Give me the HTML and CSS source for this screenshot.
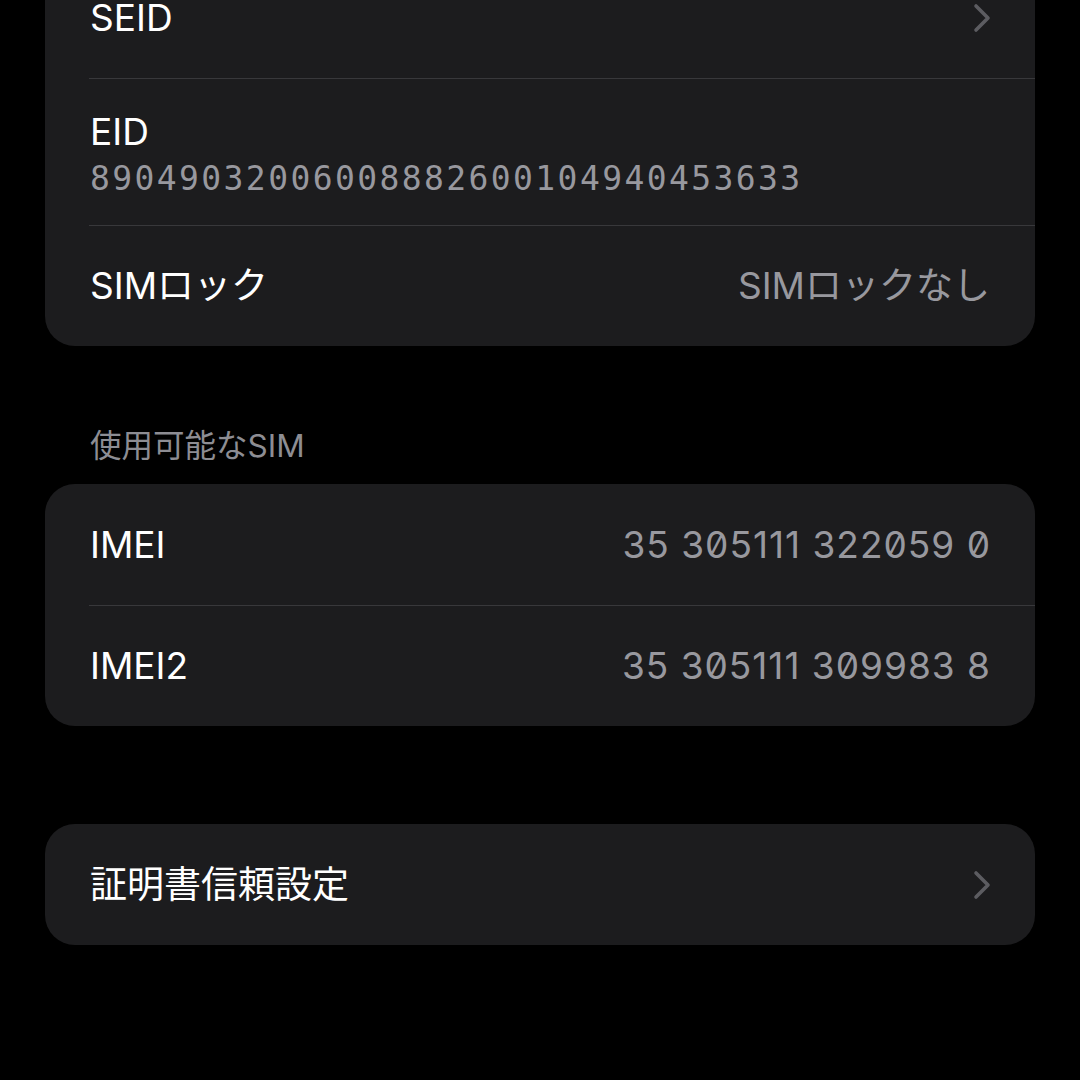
FILE: index.html
```html
<!DOCTYPE html>
<html lang="ja">
<head>
<meta charset="utf-8">
<title>情報</title>
<link rel="stylesheet" href="styles.css">
</head>
<body>
<main class="page">
  <section class="card card-first">
    <div class="row">
      <span class="label">SEID</span>
      <svg class="chevron" viewBox="0 0 18 30" width="18" height="30"><polyline points="3,3 15,15 3,27"/></svg>
    </div>
    <div class="row row-stack">
      <span class="label">EID</span>
      <span class="mono">89049032006008882600104940453633</span>
    </div>
    <div class="row">
      <span class="label">SIMロック</span>
      <span class="value">SIMロックなし</span>
    </div>
  </section>

  <h2 class="section-header">使用可能なSIM</h2>

  <section class="card">
    <div class="row">
      <span class="label">IMEI</span>
      <span class="value num">35 305111 322059 0</span>
    </div>
    <div class="row">
      <span class="label">IMEI2</span>
      <span class="value num">35 305111 309983 8</span>
    </div>
  </section>

  <section class="card card-last">
    <div class="row">
      <span class="label">証明書信頼設定</span>
      <svg class="chevron" viewBox="0 0 18 30" width="18" height="30"><polyline points="3,3 15,15 3,27"/></svg>
    </div>
  </section>
</main>
</body>
</html>
```
FILE: styles.css
```css
html, body {
  margin: 0;
  padding: 0;
  background: #000000;
}

body {
  width: 1080px;
  height: 1080px;
  overflow: hidden;
  font-family: "Inter", "Noto Sans CJK JP", sans-serif;
  color: #ffffff;
}

.page {
  display: flex;
  flex-direction: column;
  padding: 0 45px;
  margin-top: -43px;
}

.card {
  background: #1c1c1e;
  border-radius: 30px;
  display: flex;
  flex-direction: column;
}

.row {
  position: relative;
  height: 121px;
  box-sizing: border-box;
  display: flex;
  align-items: center;
  justify-content: space-between;
  padding: 0 45px;
}

.row + .row::before {
  content: "";
  position: absolute;
  top: 0;
  left: 44px;
  right: 0;
  height: 1px;
  background: #38383b;
}

.row-stack {
  height: 147px;
  flex-direction: column;
  align-items: flex-start;
  justify-content: flex-start;
  padding-top: 32px;
  gap: 5px;
}

.label {
  font-size: 37px;
  line-height: 44px;
  font-weight: 400;
  color: #ffffff;
}

.value {
  font-size: 37px;
  line-height: 44px;
  color: #98989e;
}

.num {
  font-feature-settings: "zero" 1;
  letter-spacing: 1px;
  margin-right: -1px;
}

.mono {
  font-family: "DejaVu Sans Mono", monospace;
  font-size: 33px;
  line-height: 40px;
  letter-spacing: 2.4px;
  color: #98989e;
}

.chevron {
  fill: none;
  stroke: #5c5c61;
  stroke-width: 3.6;
  stroke-linecap: round;
  stroke-linejoin: round;
  margin-right: -1px;
}

.section-header {
  margin: 81px 0 19px 0;
  padding: 0 45px;
  font-size: 31.5px;
  line-height: 38px;
  font-weight: 400;
  color: #8d8d93;
}

.card-last {
  margin-top: 98px;
}
```
